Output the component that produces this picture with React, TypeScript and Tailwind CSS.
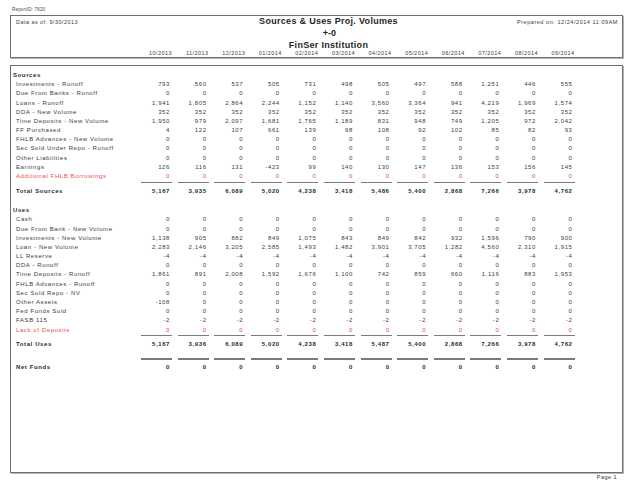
import * as React from "react";

// Report columns
const months = [
  "10/2013",
  "11/2013",
  "12/2013",
  "01/2014",
  "02/2014",
  "03/2014",
  "04/2014",
  "05/2014",
  "06/2014",
  "07/2014",
  "08/2014",
  "09/2014",
];

const zeros = Array(12).fill("0");

type Line = { label: string; values: string[]; red?: boolean };

const sources: Line[] = [
  { label: "Investments - Runoff", values: ["793", "560", "537", "505", "731", "498", "505", "497", "588", "1,251", "446", "555"] },
  { label: "Due From Banks - Runoff", values: zeros },
  { label: "Loans - Runoff", values: ["1,941", "1,805", "2,864", "2,244", "1,152", "1,140", "3,560", "3,364", "941", "4,219", "1,969", "1,574"] },
  { label: "DDA - New Volume", values: Array(12).fill("352") },
  { label: "Time Deposits - New Volume", values: ["1,950", "979", "2,097", "1,681", "1,765", "1,189", "831", "948", "749", "1,205", "972", "2,042"] },
  { label: "FF Purchased", values: ["4", "122", "107", "661", "139", "98", "108", "92", "102", "85", "82", "93"] },
  { label: "FHLB Advances - New Volume", values: zeros },
  { label: "Sec Sold Under Repo - Runoff", values: zeros },
  { label: "Other Liabilities", values: zeros },
  { label: "Earnings", values: ["126", "116", "131", "-423", "99", "140", "130", "147", "136", "153", "156", "145"] },
  { label: "Additional FHLB Borrowings", values: zeros, red: true },
];

const uses: Line[] = [
  { label: "Cash", values: zeros },
  { label: "Due From Bank - New Volume", values: zeros },
  { label: "Investments - New Volume", values: ["1,138", "905", "882", "849", "1,075", "843", "849", "842", "932", "1,596", "790", "900"] },
  { label: "Loan - New Volume", values: ["2,283", "2,146", "3,205", "2,585", "1,493", "1,482", "3,901", "3,705", "1,282", "4,560", "2,310", "1,915"] },
  { label: "LL Reserve", values: Array(12).fill("-4") },
  { label: "DDA - Runoff", values: zeros },
  { label: "Time Deposits - Runoff", values: ["1,861", "891", "2,008", "1,592", "1,676", "1,100", "742", "859", "660", "1,116", "883", "1,953"] },
  { label: "FHLB Advances - Runoff", values: zeros },
  { label: "Sec Sold Repo - NV", values: zeros },
  { label: "Other Assets", values: ["-108", "0", "0", "0", "0", "0", "0", "0", "0", "0", "0", "0"] },
  { label: "Fed Funds Sold", values: zeros },
  { label: "FASB 115", values: Array(12).fill("-2") },
  { label: "Lack of Deposits", values: zeros, red: true },
];

const totalSources = ["5,167", "3,935", "6,089", "5,020", "4,238", "3,418", "5,486", "5,400", "2,868", "7,266", "3,978", "4,762"];
const totalUses = ["5,167", "3,936", "6,089", "5,020", "4,238", "3,418", "5,487", "5,400", "2,868", "7,266", "3,978", "4,762"];

const Row = ({ line }: { line: Line }) => (
  <div
    className={`flex h-[9.2px] items-center text-[6px] leading-none tracking-[0.6px] ${
      line.red ? "text-[#f04646]" : "text-[#3a3a3a]"
    }`}
  >
    <div className="w-[130px] pl-[5px] whitespace-nowrap">{line.label}</div>
    {line.values.map((v, i) => (
      <div key={i} className="w-[36.6px]">
        <div className="w-[31px] pr-[2px] text-right">{v}</div>
      </div>
    ))}
  </div>
);

const Rule = ({ className }: { className: string }) => (
  <div className={`flex ${className}`}>
    <div className="w-[130px]" />
    {months.map((m) => (
      <div key={m} className="w-[36.6px]">
        <div className="w-[31px] h-[1.5px] bg-[#7a7a7a]" />
      </div>
    ))}
  </div>
);

const TotalRow = ({ label, values, h }: { label: string; values: string[]; h: string }) => (
  <div className={`flex items-center text-[6px] leading-none tracking-[0.6px] font-bold text-[#2a2a2a] ${h}`}>
    <div className="w-[130px] pl-[5px] whitespace-nowrap">{label}</div>
    {values.map((v, i) => (
      <div key={i} className="w-[36.6px]">
        <div className="w-[31px] pr-[2px] text-right">{v}</div>
      </div>
    ))}
  </div>
);

const App = () => {
  return (
    <div className="w-[635px] h-[490px] bg-white opacity-[0.99] font-['Liberation_Sans',Arial,sans-serif] text-[#3a3a3a]">
      {/* Report id */}
      <div className="h-[15px] pl-[12px] pt-[7px] text-[4.5px] leading-[5px] tracking-[0.2px] text-[#444]">
        ReportID: 7620
      </div>

      {/* Header box */}
      <div className="ml-[10px] w-[613px] h-[43px] border border-[#6e6e6e] shadow-[1px_1px_0_#b5b5b5]">
        <div className="grid grid-cols-[1fr_auto_1fr] h-[11px] items-center">
          <div className="pl-[5px] text-[5.5px] leading-none tracking-[0.45px] pt-[2px]">Data as of: 9/30/2013</div>
          <div className="pl-[24px] text-[9px] font-bold tracking-[0.3px] leading-none text-[#1e1e1e]">
            Sources &amp; Uses Proj. Volumes
          </div>
          <div className="pr-[4px] text-right text-[5.5px] leading-none tracking-[0.55px] pt-[2px]">
            Prepared on: 12/24/2014 11:09AM
          </div>
        </div>
        <div className="h-[13px] flex items-center justify-center pl-[26px] text-[9px] font-bold leading-none text-[#1e1e1e]">
          +-0
        </div>
        <div className="h-[10px] flex items-center justify-center pl-[24px] text-[9px] font-bold tracking-[0.3px] leading-none text-[#1e1e1e]">
          FinSer Institution
        </div>
        <div className="flex h-[8px] items-center text-[5.5px] leading-none tracking-[0.45px]">
          <div className="w-[130px]" />
          {months.map((m) => (
            <div key={m} className="w-[36.6px]">
              <div className="w-[31px] text-right">{m}</div>
            </div>
          ))}
        </div>
      </div>

      {/* Body box */}
      <div className="mt-[7px] ml-[10px] w-[613px] h-[408px] border border-[#6e6e6e] shadow-[1px_1px_0_#b5b5b5] pt-[4.4px]">
        <div className="h-[9.2px] flex items-center pl-[2px] text-[6px] leading-none tracking-[0.6px] font-bold text-[#2a2a2a]">
          Sources
        </div>
        {sources.map((l) => (
          <Row key={l.label} line={l} />
        ))}
        <Rule className="mt-[1px]" />
        <TotalRow label="Total Sources" values={totalSources} h="h-[15px]" />

        <div className="mt-[7.4px] h-[9.2px] flex items-center pl-[2px] text-[6px] leading-none tracking-[0.6px] font-bold text-[#2a2a2a]">
          Uses
        </div>
        {uses.map((l) => (
          <Row key={l.label} line={l} />
        ))}
        <Rule className="mt-[0.5px]" />
        <TotalRow label="Total Uses" values={totalUses} h="h-[15px]" />

        <Rule className="mt-[7px]" />
        <TotalRow label="Net Funds" values={zeros} h="h-[14px]" />
      </div>

      {/* Footer */}
      <div className="h-[9px] flex items-center justify-end pr-[18px] text-[5.5px] leading-none tracking-[0.45px] text-[#333]">
        Page 1
      </div>
    </div>
  );
};

export default App;
